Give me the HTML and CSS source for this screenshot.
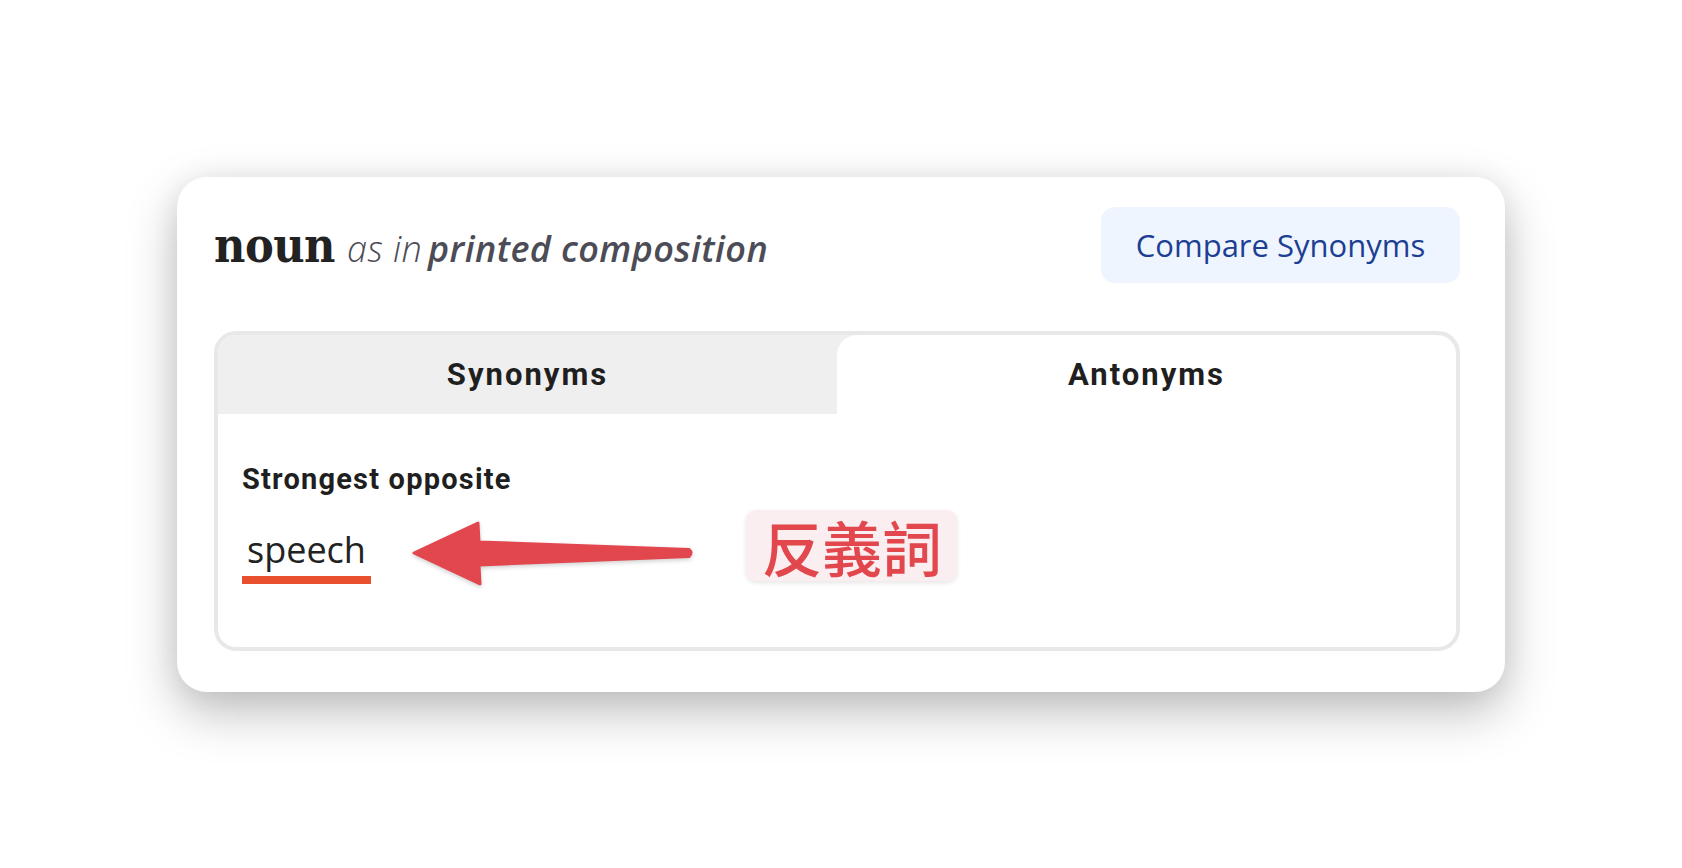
FILE: index.html
```html
<!DOCTYPE html>
<html lang="en">
<head>
<meta charset="utf-8">
<title>noun as in printed composition</title>
<link rel="stylesheet" href="styles.css">
</head>
<body>
<main class="stage">
  <section class="card">
    <header class="card-head">
      <h2 class="title"><span class="pos">noun</span> <span class="as-in">as in</span> <span class="sense">printed composition</span></h2>
      <button class="compare">Compare Synonyms</button>
    </header>
    <div class="tabs">
      <div class="tab-bar">
        <div class="tab">Synonyms</div>
        <div class="tab active">Antonyms</div>
      </div>
      <div class="tab-body">
        <p class="strength">Strongest opposite</p>
        <a class="word">speech</a>
        <svg class="arrow" width="290" height="84" viewBox="0 0 290 84">
          <path d="M6 41 L70 11 L71 30 L281 37.5 Q285 41 281 44.5 L71 53 L72 72 Z" fill="#e2474e" stroke="#e2474e" stroke-width="3" stroke-linejoin="round"/>
        </svg>
        <div class="label">反義詞</div>
      </div>
    </div>
  </section>
</main>
</body>
</html>
```
FILE: styles.css
```css
html, body {
  margin: 0;
  padding: 0;
  background: #ffffff;
}

.stage {
  height: 868px;
  display: flex;
  align-items: center;
  justify-content: center;
}

.card {
  width: 1328px;
  box-sizing: border-box;
  padding: 30px 45px 41px 37px;
  background: #ffffff;
  border-radius: 30px;
  box-shadow: 0 20px 50px rgba(0, 0, 0, 0.26), 0 0 28px rgba(0, 0, 0, 0.06);
}

.card-head {
  display: flex;
  align-items: center;
  justify-content: space-between;
  height: 76px;
}

.title {
  margin: 0;
  padding-top: 0;
  font-weight: normal;
  white-space: nowrap;
  line-height: 1;
}

.pos {
  font-family: "DejaVu Serif Condensed", "DejaVu Serif", serif;
  font-weight: 700;
  font-size: 48px;
  color: #222222;
  letter-spacing: -0.5px;
}

.as-in,
.sense {
  font-family: "Open Sans", sans-serif;
  font-style: italic;
  font-size: 36px;
  letter-spacing: 0.4px;
  color: #4c4c56;
}

.as-in {
  margin-left: 6px;
  font-weight: 300;
}

.sense {
  font-weight: 600;
}

.compare {
  height: 76px;
  width: 359px;
  border: 0;
  border-radius: 14px;
  background: #eff5fe;
  color: #1d3f93;
  font-family: "Open Sans", sans-serif;
  font-size: 31px;
  font-weight: 400;
  padding: 0;
  cursor: pointer;
}

.tabs {
  margin-top: 48px;
  border: 4px solid #e8e8ea;
  border-radius: 22px;
  overflow: hidden;
}

.tab-bar {
  display: grid;
  grid-template-columns: 1fr 1fr;
  background: #efefef;
  height: 79px;
}

.tab {
  display: flex;
  align-items: center;
  justify-content: center;
  font-family: Roboto, "Liberation Sans", sans-serif;
  font-weight: 700;
  font-size: 31px;
  letter-spacing: 2px;
  color: #1f1f1f;
}

.tab.active {
  background: #ffffff;
  border-radius: 20px 20px 0 0;
}

.tab-body {
  position: relative;
  padding: 48px 24px 63px;
}

.strength {
  margin: 0;
  font-family: Roboto, "Liberation Sans", sans-serif;
  font-weight: 700;
  font-size: 29px;
  line-height: 34px;
  letter-spacing: 1.2px;
  color: #1f1f1f;
}

.word {
  display: inline-block;
  margin-top: 36px;
  padding: 0 5px 8px;
  border-bottom: 8px solid #e8502e;
  font-family: "Open Sans", sans-serif;
  font-size: 36px;
  line-height: 36px;
  color: #222222;
}

.arrow {
  position: absolute;
  left: 190px;
  top: 98px;
  filter: drop-shadow(0 2px 2px rgba(0, 0, 0, 0.18));
}

.label {
  position: absolute;
  left: 528px;
  top: 96px;
  height: 71px;
  padding: 0 15px 0 16px;
  border-radius: 10px;
  background: #faeef0;
  box-shadow: 0 2px 5px rgba(0, 0, 0, 0.1);
  font-family: "Noto Sans CJK TC", "Noto Sans CJK SC", sans-serif;
  font-weight: 500;
  font-size: 60px;
  line-height: 71px;
  color: #e2474e;
}
```
